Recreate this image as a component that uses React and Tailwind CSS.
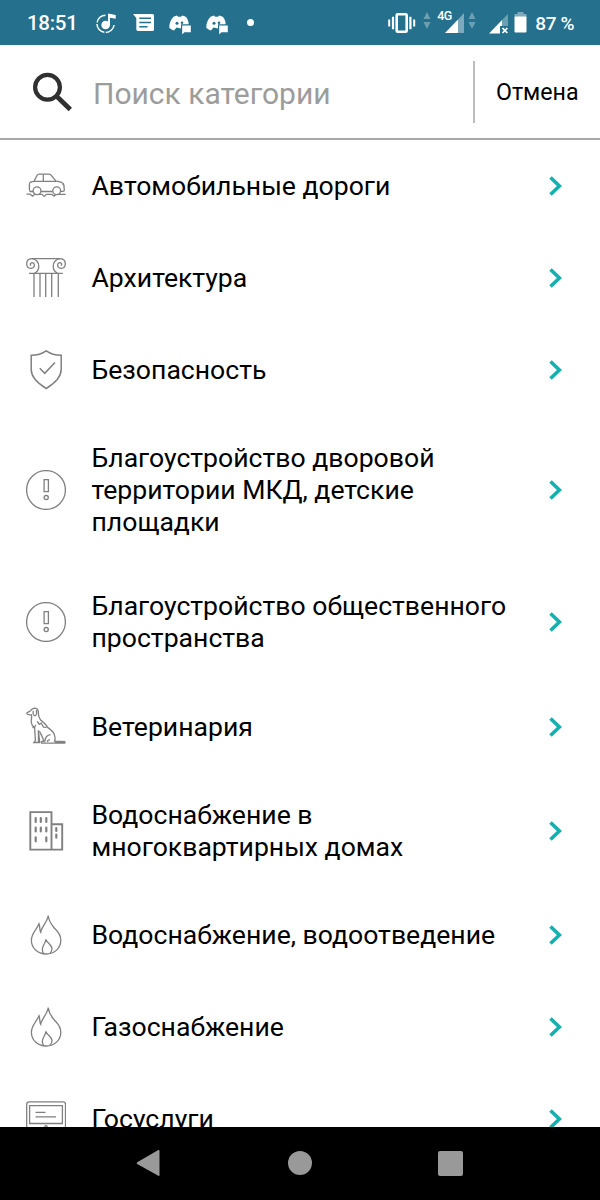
// src/App.jsx
const CarIcon = () => (
  <>
    <path d="M7 25.5H4.2C3.3 25 3.4 23.5 3.4 22V18.2C3.4 16 5 15.4 8 15.3L11 9.5C11.6 8.4 12 8.2 13.5 8.2H22.5C24 8.2 24.5 8.5 25.3 9.4L30 15.2C35 15.7 37.5 16.5 37.9 19L38.3 24C38.3 25 38 25.4 37 25.4H35" />
    <path d="M15 25.5H26.7M8 15.3H30M17.3 8.5V15M36.5 18.5H38" />
    <circle cx="11" cy="24.8" r="3.9" />
    <circle cx="30.7" cy="24.8" r="3.9" />
    <path d="M.5 28.2H4.2L6.5 30.2L8.8 28.3M13 28.3H16L18.3 30.4L20.5 28.3H25.8L28 30.2L29.8 28.5M32 28.4H39.7" />
  </>
);

const ColumnIcon = () => (
  <>
    <path d="M5.5 .7H34.5M3 15.4H36.8" />
    <path d="M5.5 .7C1.8 1 .6 4 .7 6.3C.9 9 2.8 10.4 5 10.3C7.5 10.2 8.6 8.3 8.3 6.5C8 4.8 6 4.2 4.8 5.2C4 6 4.3 7.2 5.2 7.4" />
    <path d="M5.5 .7C10 .8 12.8 4.2 12.8 8.3C12.8 11.8 11 14 8.5 15.3" />
    <path d="M34.5 .7C38.2 1 39.4 4 39.3 6.3C39.1 9 37.2 10.4 35 10.3C32.5 10.2 31.4 8.3 31.7 6.5C32 4.8 34 4.2 35.2 5.2C36 6 35.7 7.2 34.8 7.4" />
    <path d="M34.5 .7C30 .8 27.2 4.2 27.2 8.3C27.2 11.8 29 14 31.5 15.3" />
    <path d="M8 15.4V39M14 15.4V39M19.7 15.4V39M25.7 15.4V39M32.3 15.4V39" />
  </>
);

const ShieldIcon = () => (
  <>
    <path strokeWidth="1.5" d="M20.2 .8C16 3.8 10.5 5.2 5.2 5.2V19.5C5.2 28 12 33.5 20.2 38.5C28.4 33.5 35.2 28 35.2 19.5V5.2C29.9 5.2 24.4 3.8 20.2 .8Z" />
    <path strokeWidth="1.5" d="M13.8 18.3L18.7 23.3L29 12.5" />
  </>
);

const AlertIcon = () => (
  <>
    <circle cx="20" cy="20" r="19.4" />
    <path d="M18.1 9.6H22.4V21.7H18.1Z" />
    <circle cx="20.2" cy="27.6" r="2.1" />
  </>
);

const DogIcon = () => (
  <>
    <path d="M.6 6.3C1.8 4.8 3.6 5 4.6 3.6C5.4 1.6 8.5.8 10.5 1.5C12.2 2.3 12.5 4.5 12.4 6.5C12.4 9.5 13.2 11.4 14.8 13.2C17.8 15.7 20.2 17.6 21.6 20.4C25.5 23 28.6 26.2 29 30.2C29.2 32 29 33.3 28.5 34.2L38.8 34.6V36.2H15.6L15.4 34.6L17.7 34.2C17.2 31 15.2 27.5 13.4 24.2" />
    <path d="M.6 6.3C1.5 8 3.4 8.1 5.4 7.8C6.4 10.5 4.7 12.5 5.3 15.5C5.6 18 6.8 19.5 8.6 20.7L9.4 33.6L7.9 35.5H12.5L12.4 23.3L13.7 35.7H10.5" />
    <path d="M7.2 3.8C6.8 6 7.2 8.7 9 8.8C10.7 8.2 10.8 5.3 10.3 3M6.4 20.6C8.8 20.8 9.5 19.2 9.6 17.8" />
    <path d="M11.2 14.3L13.2 17.4L15.2 16.2L17.5 20.2L20.6 20.4M18.7 35.2C19 31.2 20.3 28 24.6 27.7M21.8 35C21 33.5 22.5 32.5 24 33.2M29 35.4H38.8" />
  </>
);

const BuildingIcon = () => (
  <>
    <path strokeWidth="1.9" d="M4.3 1.1H25.5V38.6H4.3ZM25.5 13.2H36.2V38.6H25.5" />
    <path strokeWidth="2.2" strokeLinecap="round" d="M9.7 7V11M14.8 7V11M20.3 7V11M9.7 16.5V20.5M14.8 16.5V20.5M20.3 16.5V20.5M9.7 26.3V30.3M20.3 26.3V30.3M30.3 17V20M30.3 23.5V26.7" />
  </>
);

const FlameIcon = () => (
  <>
    <path d="M22.2 .5C21.7 6.5 15.5 12 14.7 17.3C13.4 15 14.2 12.5 13 8.8C10.5 15 5.4 18.5 5.4 25.3C5.4 33 11.5 39 20.2 39C28.6 39 34.8 33.2 34.8 25.3C34.8 18 30.5 16 27.5 12C24.6 8.5 22.7 5.5 22.2 .5Z" />
    <path d="M17.8 38.8C15.3 35.5 16.3 33 17.3 30.8C18.5 28.5 19.5 27.3 19.9 24.4C21 28 25.5 29.5 26 33.3C26.1 35.5 25.2 37.3 23.8 38.5" />
  </>
);

const MonitorIcon = () => (
  <>
    <rect x=".7" y="2.9" width="38.8" height="28" rx="2.5" />
    <path d="M3.6 6.6H36.4V24.5H3.6Z" />
    <path d="M9.5 13.4H19.5M9.5 17.8H30" />
    <circle cx="20" cy="27.8" r="1.2" />
  </>
);

const categories = [
  { label: "Автомобильные дороги", icon: CarIcon, height: "h-[91.7px]" },
  { label: "Архитектура", icon: ColumnIcon, height: "h-[91.7px]" },
  { label: "Безопасность", icon: ShieldIcon, height: "h-[91.7px]" },
  { label: "Благоустройство дворовой территории МКД, детские площадки", icon: AlertIcon, height: "h-[148.3px]" },
  { label: "Благоустройство общественного пространства", icon: AlertIcon, height: "h-[117px]" },
  { label: "Ветеринария", icon: DogIcon, height: "h-[91.7px]" },
  { label: "Водоснабжение в многоквартирных домах", icon: BuildingIcon, height: "h-[117px]" },
  { label: "Водоснабжение, водоотведение", icon: FlameIcon, height: "h-[91.7px]" },
  { label: "Газоснабжение", icon: FlameIcon, height: "h-[91.7px]" },
  { label: "Госуслуги", icon: MonitorIcon, height: "h-[91.7px]" },
];

const DiscordIcon = () => (
  <svg width="23" height="20" viewBox="0 0 23 20" fill="white">
    <path d="M4.5 1.8L8 .6L9.2 1.8H12L13.2 .6L16.8 1.8C18.8 4.3 19.8 6.5 19.6 9.2H12V13.4L7.5 12.6L5 15.4C3 15 1.3 14 .3 12.8C.1 8.5 1.8 4.6 4.5 1.8Z" />
    <path d="M13.2 10.4H21.8V17.3H15.4L13.2 19.4Z" />
    <circle cx="8" cy="8.2" r="1.5" fill="#24708d" />
    <circle cx="13" cy="7.8" r="1.3" fill="#24708d" />
  </svg>
);

const DataArrows = () => (
  <svg width="8" height="18" viewBox="0 0 8 18" fill="#6c9fb2">
    <path d="M4 0L7.5 7H.5ZM4 17L7.5 10H.5Z" />
  </svg>
);

function StatusBar() {
  return (
    <div className="flex h-[45px] shrink-0 items-center bg-[#24708d] pl-[27px] text-white">
      <span className="w-[69px] pt-0.5 text-[20.5px] font-medium leading-none tracking-[-0.3px]">18:51</span>
      <svg width="21" height="22" viewBox="0 0 21 22">
        <path d="M9.5 3.2A8.6 8.6 0 1 0 18.1 13" fill="none" stroke="white" strokeWidth="1.5" strokeDasharray="12 1.5" />
        <circle cx="9.6" cy="13" r="4.3" fill="white" />
        <path d="M12 13.5V1.4L19.7 3V6.8L14 5.8V13.5Z" fill="white" />
      </svg>
      <svg className="ml-4" width="22" height="18" viewBox="0 0 22 18">
        <path d="M0 0H19.5Q21 0 21 1.5V15.5Q21 17 19.5 17H5Q3.3 17 3.3 15.3V4Z" fill="white" />
        <path d="M6.3 4.3H18M6.3 8.5H18M6.3 12.7H14.5" stroke="#24708d" strokeWidth="1.5" />
      </svg>
      <div className="ml-3.5 mt-1 flex gap-3.5">
        <DiscordIcon />
        <DiscordIcon />
      </div>
      <div className="ml-[18px] size-[7px] rounded-full bg-white" />

      <div className="ml-auto flex items-center pr-[26px]">
        <svg width="28" height="22" viewBox="0 0 28 22" fill="none" stroke="white">
          <rect x="8.7" y="2.2" width="10" height="17.6" rx="1" strokeWidth="2.6" />
          <path d="M5 4.8V17.2M22.4 4.8V17.2" strokeWidth="2.2" />
          <path d="M1.2 7.5V14.5M26.2 7.5V14.5" strokeWidth="2" />
        </svg>
        <div className="ml-[7px] -mt-1">
          <DataArrows />
        </div>
        <div className="relative ml-[14px] h-[23px] w-[19px]">
          <span className="absolute -left-2 -top-[1px] text-[12.5px] font-medium leading-none tracking-[-0.6px]">4G</span>
          <svg className="mt-[2px]" width="19" height="20" viewBox="0 0 19 20">
            <path d="M0 20L13 6.5V20Z" fill="white" />
            <path d="M13 6.5L19 0V20H13Z" fill="#7ca9bb" />
          </svg>
        </div>
        <div className="ml-1 -mt-1">
          <DataArrows />
        </div>
        <svg className="ml-[13px] mt-0.5" width="20" height="20" viewBox="0 0 20 20">
          <path d="M0 19.5L13 6V12H11V19.5Z" fill="white" />
          <path d="M13 6L19 0V12H13Z" fill="#6c9fb2" />
          <path d="M13.5 14L18.3 19M18.3 14L13.5 19" stroke="white" strokeWidth="1.8" />
        </svg>
        <svg className="ml-[5px]" width="14" height="21" viewBox="0 0 14 21">
          <path d="M3.5 0H9.5V2H12.5V5H.5V2H3.5Z" fill="#7ca9bb" />
          <rect x=".5" y="4.5" width="12" height="16" rx="1" fill="white" />
        </svg>
        <span className="ml-[7px] pt-0.5 text-[19px] font-medium leading-none tracking-[-0.4px]">87 %</span>
      </div>
    </div>
  );
}

function SearchBar() {
  return (
    <div className="flex h-[95px] shrink-0 items-center border-b-2 border-[#a8a8a8] pl-[32px]">
      <svg width="41" height="40" viewBox="0 0 41 40" fill="none" stroke="#303030">
        <circle cx="15.5" cy="15.3" r="12.4" strokeWidth="4.2" />
        <path d="M24.5 24.5L27 26.5L38.3 37.5" strokeWidth="4.8" />
      </svg>
      <span className="ml-5 flex-1 whitespace-nowrap pt-1 text-[30px] leading-none text-[#9c9c9c]">Поиск категории</span>
      <div className="h-[62px] w-0.5 bg-[#bdbdbd]" />
      <button className="w-[125px] pl-[21px] pt-[3px] text-left text-[23.2px] leading-none text-black">Отмена</button>
    </div>
  );
}

function CategoryRow({ label, icon: Icon, height }) {
  return (
    <li className={`flex shrink-0 items-center pl-[26px] pr-[37px] ${height}`}>
      <svg width="40" height="40" viewBox="0 0 40 40" fill="none" stroke="#808080" strokeWidth="1.3" className="shrink-0">
        <Icon />
      </svg>
      <span className="ml-[25.5px] w-[430px] text-[26.6px] leading-[32px] text-black">{label}</span>
      <svg className="ml-auto shrink-0" width="14" height="20" viewBox="0 0 14 20" fill="none" stroke="#14afae" strokeWidth="3.6">
        <path d="M1.5 1.5L10.4 10L1.5 18.5" />
      </svg>
    </li>
  );
}

export default function App() {
  return (
    <div className="flex h-[1200px] w-[600px] flex-col overflow-hidden bg-white font-[Roboto,sans-serif]">
      <StatusBar />
      <SearchBar />
      <ul className="flex min-h-0 flex-1 flex-col overflow-hidden pt-[0.6px]">
        {categories.map((category) => (
          <CategoryRow key={category.label} {...category} />
        ))}
      </ul>
      <nav className="flex h-[73.5px] shrink-0 items-center justify-between bg-black pl-[136px] pr-[137px]">
        <svg width="24" height="28" viewBox="0 0 24 28" fill="#999">
          <path d="M1.2 13.2L22.3 1Q23.5.5 23.5 2V26Q23.5 27.5 22.3 26.8L1.2 15Q0 14.1 1.2 13.2Z" />
        </svg>
        <div className="ml-px size-6 rounded-full bg-[#999]" />
        <div className="size-[25px] rounded-[2px] bg-[#999]" />
      </nav>
    </div>
  );
}
